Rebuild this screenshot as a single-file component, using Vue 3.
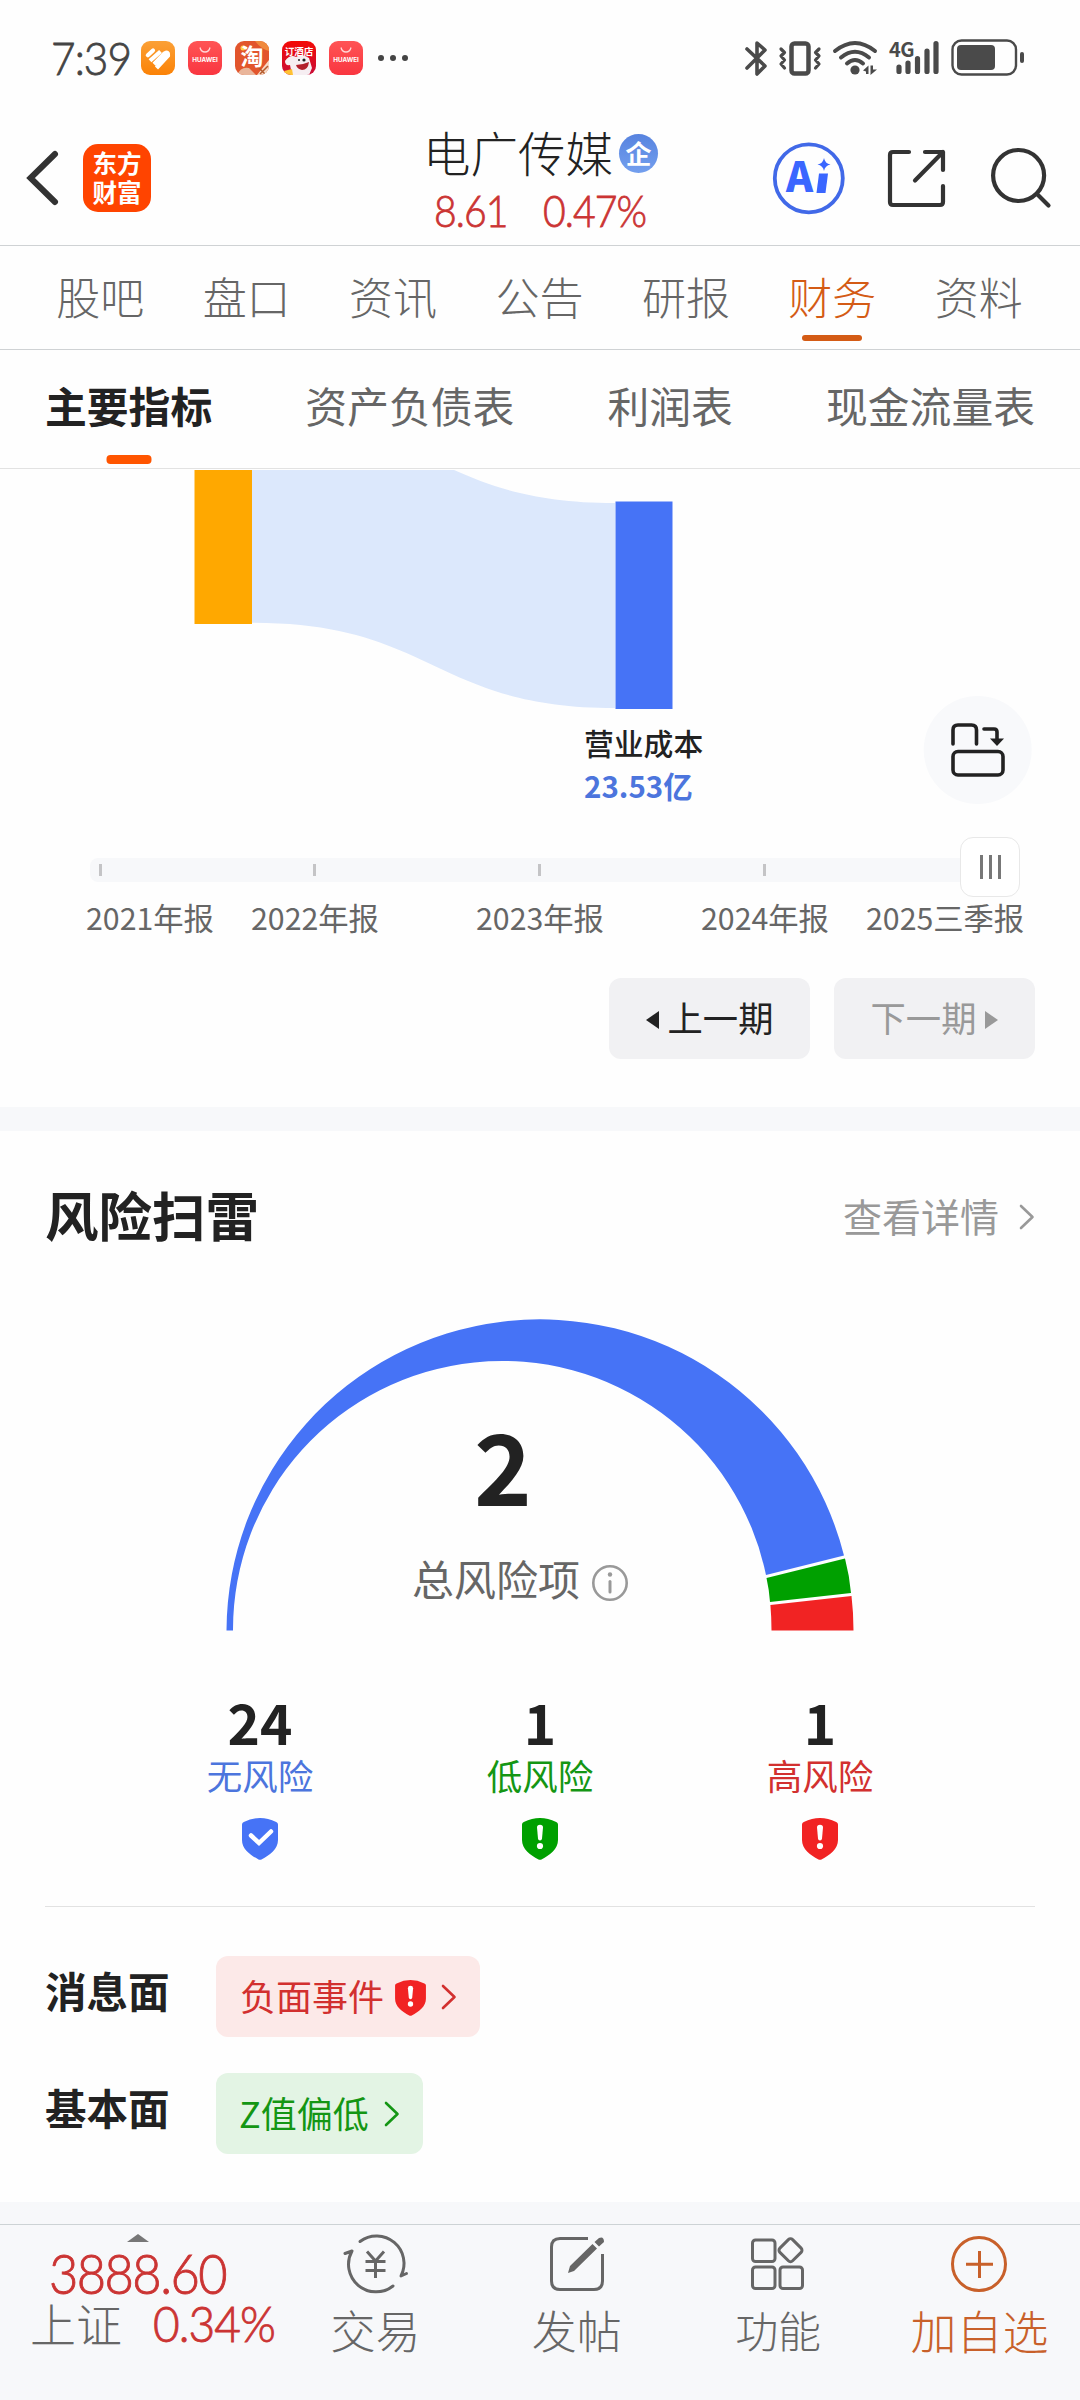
<template>
  <div class="page">
    <svg width="0" height="0" class="defs">
      <symbol id="shield" viewBox="0 0 36 42">
        <path
          d="M0 6.5Q0 4.6 1.8 4 10 0 18 0T34.200 4Q36 4.600 36 6.500V22C36 31 28 37 19.500 41.400Q18 42.200 16.500 41.400C8 37 0 31 0 22Z"
          fill="currentColor"
        />
      </symbol>
      <symbol id="warn" viewBox="0 0 36 42">
        <use href="#shield" width="36" height="42" />
        <path
          d="M15 9.500Q15 6.800 18 6.800T21 9.500L20 20.500Q19.800 22.500 18 22.500T16 20.500Z"
          fill="#fff"
        />
        <circle cx="18" cy="28" r="3.100" fill="#fff" />
      </symbol>
      <symbol id="safe" viewBox="0 0 36 42">
        <use href="#shield" width="36" height="42" />
        <path
          d="M9 17.500L17 25L29 13.500"
          fill="none"
          stroke="#fff"
          stroke-width="4.500"
          stroke-linecap="round"
        />
      </symbol>
      <symbol id="arrow" viewBox="0 0 16 26">
        <path
          d="M2 2L13.500 13L2 24"
          fill="none"
          stroke="currentColor"
          stroke-width="2.600"
          stroke-linecap="round"
          stroke-linejoin="round"
        />
      </symbol>
    </svg>

    <div class="status">
      <span class="time">7:39</span>
      <div class="apps">
        <span class="app orange">
          <svg viewBox="0 0 34 34">
            <g fill="none" stroke="#fff" stroke-width="4.200">
              <path d="M6.800 14.200L12 9.500" stroke-linecap="round" />
              <path d="M9 19.800L19.500 10.500" />
              <path d="M13 23.200L23.500 12.500Q27.500 10 27 14.500L15.500 27" />
            </g>
          </svg>
        </span>
        <span class="app huawei">
          <svg viewBox="0 0 34 34">
            <path
              d="M12 6.500Q13 11 17 11T22 6.500"
              fill="none"
              stroke="#ffd5d5"
              stroke-width="1.300"
            />
          </svg>
          <b>HUAWEI</b>
        </span>
        <span class="app taobao">
          <svg viewBox="0 0 34 34">
            <path d="M20 0H34V10Q26 8 20 0Z" fill="#f08a3c" />
            <circle cx="8" cy="7" r="2.500" fill="#ffd04a" />
            <path d="M2 34Q6 25 14 27L21 34Z" fill="#e9b59a" />
            <path d="M22 34L34 19V34Z" fill="#f6d9c4" />
            <path d="M25 33L33 25M24 27L30 33" stroke="#b45a2c" stroke-width="1.500" />
          </svg>
          <b>淘</b>
        </span>
        <span class="app hotel">
          <svg viewBox="0 0 34 34">
            <path
              d="M3 20Q8 13 14 16Q20 12 27 17L30 27L27 34H10L8 24Q3 25 3 20Z"
              fill="#f6eef2"
            />
            <path d="M14 24Q20 24 27 21Q26 29 20 29Q15 28 14 24Z" fill="#b3202c" />
            <circle cx="17" cy="19" r="1" fill="#222" />
            <circle cx="22" cy="19" r="1.600" fill="#222" />
            <path d="M2 30L10 28L11 34H3Z" fill="#ffc233" />
          </svg>
          <b>订酒店</b>
        </span>
        <span class="app huawei">
          <svg viewBox="0 0 34 34">
            <path
              d="M12 6.500Q13 11 17 11T22 6.500"
              fill="none"
              stroke="#ffd5d5"
              stroke-width="1.300"
            />
          </svg>
          <b>HUAWEI</b>
        </span>
      </div>
      <div class="dots"><i></i><i></i><i></i></div>
      <svg class="signals" width="290" height="42" viewBox="740 36 290 42">
        <g fill="none" stroke="#4a4a4a" stroke-linecap="round" stroke-linejoin="round">
          <path
            d="M747 48L765 65L757 73V42L765 49L747 67"
            stroke-width="3.600"
          />
          <rect x="791.500" y="42.500" width="17" height="30" rx="3" stroke-width="4.500" />
          <path
            d="M781 48L784.500 51.500L781 55L784.500 59L781 63L784.500 67M819 48L815.500 51.500L819 55L815.500 59L819 63L815.500 67"
            stroke-width="3.200"
          />
          <g stroke-width="4">
            <path d="M835 50Q855 34 875 50" />
            <path d="M841 56.500Q855 45 869 56.500" />
            <path d="M847 62.500Q855 55.500 863 62.500" />
          </g>
          <path
            d="M899 66V70.500M908 62V70.500M917.500 57.500V70.500M927 50V70.500M936 42.500V70.500"
            stroke-width="5.200"
          />
          <rect x="952.500" y="39.500" width="63.500" height="34" rx="9" stroke-width="2.400" />
        </g>
        <g fill="#4a4a4a">
          <circle cx="855" cy="69" r="4.600" />
          <path d="M863 69.500L868.500 64.500V73H866V70.500ZM870.500 64.500H873V68.500H877L870.500 74Z" />
          <rect x="957" y="44" width="38" height="25" rx="4" />
          <rect x="1020" y="51" width="4" height="11" rx="2" />
        </g>
        <text x="889" y="56" class="net">4G</text>
      </svg>
    </div>

    <header class="header">
      <svg class="back" width="36" height="58" viewBox="0 0 36 58">
        <path
          d="M30 5L5.500 29L30 53"
          fill="none"
          stroke="#333"
          stroke-width="6"
          stroke-linecap="round"
        />
      </svg>
      <div class="logo">东方<br />财富</div>
      <div class="stock">
        <div class="name">电广传媒<span class="corp">企</span></div>
        <div class="quote"><span>8.61</span><span>0.47%</span></div>
      </div>
      <svg class="tools" width="290" height="76" viewBox="765 140 290 76">
        <circle cx="808.800" cy="178.300" r="34" fill="none" stroke="#4169e8" stroke-width="3.800" />
        <text x="786" y="191.500" class="ai">A</text>
        <path d="M819 173.500H828L825.500 193H816.500Z" fill="#3a66ff" />
        <path
          d="M824 158Q825 163.500 830.500 164.500Q825 165.500 824 171Q823 165.500 817.500 164.500Q823 163.500 824 158Z"
          fill="#3a66ff"
        />
        <g fill="none" stroke="#333" stroke-width="4.200" stroke-linecap="round" stroke-linejoin="round">
          <path d="M909 152H893Q890 152 890 155V202Q890 205 893 205H940Q943 205 943 202V186" />
          <path d="M925 152H943V170M943 152L915 180.500" />
          <circle cx="1018.600" cy="175.500" r="25.500" />
          <path d="M1037 194L1048.500 205.500" />
        </g>
      </svg>
    </header>

    <nav class="tabs">
      <a v-for="t in tabs" :key="t" :class="{ active: t === '财务' }">{{ t }}</a>
    </nav>
    <nav class="subtabs">
      <a v-for="(t, i) in subTabs" :key="t" :class="{ active: i === 0 }">{{ t }}</a>
    </nav>

    <section class="flow">
      <svg width="1080" height="360" viewBox="0 470 1080 360">
        <path
          d="M252 418C433.500 418 433.500 503 615 503V708C433.500 708 433.500 622.700 252 622.700Z"
          fill="#dce8fc"
        />
        <rect x="194.500" y="460" width="57.500" height="164" fill="#ffa800" />
        <rect x="615.500" y="501.500" width="57" height="207.500" fill="#4673f6" />
        <text x="584" y="755" class="node-name">营业成本</text>
        <text x="584" y="797.500" class="node-value">23.53亿</text>
        <circle cx="977.700" cy="750" r="54" fill="#f8f9fb" />
        <g fill="none" stroke="#222" stroke-width="3.600" stroke-linecap="round">
          <path d="M953 744V730Q953 725 958 725H971.500Q976.500 725 976.500 730V744" />
          <rect x="953" y="751.500" width="50" height="23.500" rx="5" />
          <path d="M984 729H994Q997 729 997 732V739" />
        </g>
        <path d="M990 738.500H1004L997 746Z" fill="#222" />
      </svg>
      <div class="slider">
        <div class="track"><i v-for="n in 4" :key="n"></i></div>
        <div class="thumb"><i></i><i></i><i></i></div>
      </div>
      <div class="periods">
        <span v-for="p in periods" :key="p">{{ p }}</span>
      </div>
      <div class="pager">
        <button class="prev">
          <svg width="13" height="18"><path d="M13 0V18L0 9Z" fill="#222" /></svg>上一期
        </button>
        <button class="next">
          下一期<svg width="13" height="18"><path d="M0 0V18L13 9Z" fill="#999" /></svg>
        </button>
      </div>
    </section>

    <section class="risk">
      <div class="risk-head">
        <h2>风险扫雷</h2>
        <a>查看详情<svg width="16" height="26"><use href="#arrow" /></svg></a>
      </div>
      <svg class="gauge" width="1080" height="350" viewBox="0 1300 1080 350">
        <path
          d="M226.500 1630.500A313.500 312.500 0 0 1 844 1555.500L766 1575A269.300 268.500 0 0 0 233 1630.500Z"
          fill="#4673f6"
        />
        <path d="M845 1558.500Q849.500 1576 851 1593L770 1602Q769 1589 766.500 1578Z" fill="#00a000" />
        <path d="M851.500 1596Q853.500 1613 853.500 1630.500H771.500Q771.500 1617 770.400 1605Z" fill="#f12323" />
        <text x="503" y="1506" class="total">2</text>
        <text x="412" y="1596" class="total-label">总风险项</text>
        <g fill="none" stroke="#999" stroke-width="2.600" stroke-linecap="round">
          <circle cx="610" cy="1583" r="16.700" />
          <path d="M610 1581.500V1592" stroke-width="3" />
        </g>
        <circle cx="610" cy="1574.500" r="2.200" fill="#999" />
      </svg>
      <div class="counts">
        <div v-for="c in counts" :key="c.label">
          <strong>{{ c.value }}</strong>
          <span :style="{ color: c.color }">{{ c.label }}</span>
          <svg width="36" height="42" :style="{ color: c.fill }"><use :href="c.icon" /></svg>
        </div>
      </div>
      <div class="row">
        <b>消息面</b>
        <span class="tag red">
          <span>负面事件</span>
          <svg class="mark" width="31" height="36"><use href="#warn" /></svg>
          <svg width="16" height="26"><use href="#arrow" /></svg>
        </span>
      </div>
      <div class="row">
        <b>基本面</b>
        <span class="tag green">
          <span>Z值偏低</span>
          <svg width="16" height="26"><use href="#arrow" /></svg>
        </span>
      </div>
    </section>

    <footer class="bottom">
      <div class="index">
        <svg width="22" height="8"><path d="M0 8L11 0L22 8Z" fill="#777" /></svg>
        <div class="point">3888.60</div>
        <div class="change">上证<em>0.34%</em></div>
      </div>
      <a>
        <svg width="66" height="60" viewBox="343 2234 66 60">
          <g fill="none" stroke="#666" stroke-width="3" stroke-linecap="round" stroke-linejoin="round">
            <path d="M360 2241.500A27.500 27.500 0 0 1 401 2276L406.500 2273.500" />
            <path d="M393 2286A27.500 27.500 0 0 1 352 2251L345 2253.500" />
            <path d="M367 2251.500L375.500 2261L384 2251.500M365.500 2261.500H385.500M365.500 2270.500H385.500M375.500 2261V2278" stroke-linecap="butt" />
          </g>
        </svg>
        交易
      </a>
      <a>
        <svg width="56" height="60" viewBox="549 2234 56 60">
          <path
            d="M588 2238.500H560Q551.500 2238.500 551.500 2247V2281Q551.500 2289.500 560 2289.500H594Q602.500 2289.500 602.500 2281V2254"
            fill="none"
            stroke="#666"
            stroke-width="3"
          />
          <path d="M568 2273L570 2266L592.500 2244L597 2248.500L574 2271ZM594.500 2242L599 2238Q604 2236 604 2242L599 2246.500Z" fill="#666" />
        </svg>
        发帖
      </a>
      <a class="fn">
        <svg width="56" height="60" viewBox="751 2234 56 60">
          <g fill="none" stroke="#666" stroke-width="3">
            <rect x="753.500" y="2240" width="22.500" height="21.500" rx="3" />
            <rect x="753.500" y="2267" width="22.500" height="21.500" rx="3" />
            <rect x="781" y="2267" width="22.500" height="21.500" rx="3" />
            <rect x="782.500" y="2241.200" width="18" height="18" rx="3" transform="rotate(45 791.500 2250.200)" />
          </g>
        </svg>
        功能
      </a>
      <a class="add">
        <svg width="60" height="60" viewBox="949 2234 60 60">
          <g fill="none" stroke="#c8602a" stroke-width="3">
            <circle cx="979" cy="2264" r="26.500" />
            <path d="M966 2264.300H993M979.500 2251V2278" />
          </g>
        </svg>
        加自选
      </a>
    </footer>
  </div>
</template>

<script setup>
const tabs = ["股吧", "盘口", "资讯", "公告", "研报", "财务", "资料"];
const subTabs = ["主要指标", "资产负债表", "利润表", "现金流量表"];
const periods = ["2021年报", "2022年报", "2023年报", "2024年报", "2025三季报"];
const counts = [
  { value: 24, label: "无风险", color: "#4c75dd", fill: "#4673f6", icon: "#safe" },
  { value: 1, label: "低风险", color: "#149614", fill: "#00a000", icon: "#warn" },
  { value: 1, label: "高风险", color: "#d2302f", fill: "#f12323", icon: "#warn" },
];
</script>

<style>
body {
  margin: 0;
  background: #fff;
}
</style>

<style scoped>
.page {
  width: 1080px;
  height: 2400px;
  overflow: hidden;
  display: flex;
  flex-direction: column;
  background: #fefefe;
  color: #222;
  font-family: "Noto Sans CJK SC", sans-serif;
}
.page > * {
  flex: none;
  box-sizing: border-box;
}
.defs {
  position: absolute;
}
svg {
  display: block;
  flex: none;
}

.status {
  height: 116px;
  display: flex;
  align-items: center;
  padding-left: 51px;
}
.time {
  width: 90px;
  font: 300 46px/60px Lato, sans-serif;
  letter-spacing: -1px;
  color: #444;
  -webkit-text-stroke: 0.8px #444;
  transform: scaleX(0.92);
  transform-origin: left;
}
.apps {
  display: flex;
  gap: 13px;
}
.app {
  position: relative;
  width: 34px;
  height: 34px;
  border-radius: 9px;
  color: #fff;
}
.app svg {
  border-radius: 9px;
}
.app b {
  position: absolute;
  inset: 0;
  text-align: center;
  white-space: nowrap;
}
.orange {
  background: linear-gradient(#fba036, #fb8206);
}
.huawei {
  background: linear-gradient(#ff5455, #f93640);
}
.huawei b {
  font: 700 6.3px/39px Inter, sans-serif;
}
.taobao {
  background: #e2552c;
}
.taobao b {
  font-size: 23px;
  line-height: 28px;
}
.hotel {
  background: linear-gradient(#f40a05, #c90d38);
}
.hotel b {
  font-size: 9.5px;
  line-height: 20px;
}
.dots {
  display: flex;
  gap: 6px;
  margin-left: 15px;
}
.dots i {
  width: 6px;
  height: 6px;
  border-radius: 50%;
  background: #444;
}
.signals {
  margin-left: auto;
  margin-right: 50px;
  overflow: visible;
}
.net {
  font: 700 20px "Noto Sans CJK SC", sans-serif;
  fill: #4a4a4a;
  letter-spacing: -0.5px;
}

.header {
  height: 130px;
  border-bottom: 1px solid #cfd2d4;
  display: flex;
  align-items: center;
  padding: 0 25px 5px;
}
.logo {
  width: 68px;
  height: 68px;
  box-sizing: border-box;
  margin-left: 22px;
  padding-top: 4px;
  border-radius: 15px;
  background: #ff4400;
  color: #fff;
  font-size: 24.500px;
  font-weight: 700;
  line-height: 29px;
  text-align: center;
}
.stock {
  flex: 1;
  padding: 5px 0 0 272px;
}
.name {
  display: flex;
  align-items: center;
  font-size: 47.500px;
  font-weight: 300;
  line-height: 52px;
}
.corp {
  width: 39px;
  height: 39px;
  margin: 3px 0 0 6px;
  border-radius: 50%;
  background: linear-gradient(#5783df, #739fee);
  color: #fff;
  font-size: 26px;
  font-weight: 700;
  line-height: 37px;
  text-align: center;
}
.quote {
  display: flex;
  gap: 39px;
  padding: 8px 0 0 12px;
  font: 300 43px/50px Lato, sans-serif;
  letter-spacing: -1px;
  color: #cb3433;
  -webkit-text-stroke: 0.8px #cb3433;
  transform: scaleX(0.91);
  transform-origin: left;
}
.ai {
  font: 900 41px "Noto Sans CJK SC", sans-serif;
  fill: #3a66ff;
}

.tabs {
  height: 104px;
  border-bottom: 1px solid #cfd2d4;
  display: flex;
  padding: 0 28px 0 27px;
}
.tabs a {
  flex: 1;
  position: relative;
  text-align: center;
  font-size: 44px;
  font-weight: 300;
  line-height: 100px;
  color: #666;
}
.tabs .active {
  color: #d45b15;
}
.tabs .active::after,
.subtabs .active::after {
  content: "";
  position: absolute;
  left: 50%;
  transform: translateX(-50%);
  border-radius: 4px;
}
.tabs .active::after {
  bottom: 8px;
  width: 60px;
  height: 6px;
  background: #d45b15;
}
.subtabs {
  height: 119px;
  border-bottom: 1px solid #e2e2e2;
  display: flex;
  justify-content: space-between;
  padding: 0 45px;
}
.subtabs a {
  position: relative;
  font-size: 41.800px;
  line-height: 111px;
  color: #666;
}
.subtabs .active {
  font-weight: 700;
  color: #222;
}
.subtabs .active::after {
  bottom: 4px;
  width: 45px;
  height: 9px;
  background: #ff5500;
}

.flow {
  height: 638px;
  padding-top: 1px;
}
.node-name {
  font-size: 29.800px;
  font-weight: 500;
  fill: #222;
}
.node-value {
  font: 700 29.500px "Noto Sans CJK SC", sans-serif;
  fill: #4c75dd;
}
.slider {
  position: relative;
  height: 74px;
  padding: 28px 60px 0 90px;
  box-sizing: border-box;
}
.track {
  height: 24px;
  border-radius: 8px;
  background: #f7f8fa;
  display: grid;
  grid-template-columns: 214px 225px 225px auto;
  align-items: center;
  padding-left: 9px;
}
.track i {
  width: 3px;
  height: 12px;
  background: #c4c4c6;
}
.thumb {
  position: absolute;
  left: 960px;
  top: 7px;
  width: 60px;
  height: 60px;
  box-sizing: border-box;
  border: 1.500px solid #e8e8e8;
  border-radius: 13px;
  background: #fff;
  display: flex;
  align-items: center;
  justify-content: center;
  gap: 6px;
}
.thumb i {
  width: 3px;
  height: 24px;
  background: #777;
}
.periods {
  display: grid;
  grid-template-columns: 165px 225px 225px 165px auto;
  padding-left: 86px;
  margin-top: -3px;
  font-size: 30.300px;
  line-height: 33px;
  color: #666;
  white-space: nowrap;
}
.pager {
  display: flex;
  justify-content: flex-end;
  gap: 24px;
  padding: 44px 45px 0 0;
}
.pager button {
  width: 201px;
  height: 81px;
  border: 0;
  padding: 0 0 3px;
  border-radius: 12px;
  background: #f1f1f3;
  display: flex;
  align-items: center;
  justify-content: center;
  gap: 9px;
  font: 400 35.300px/78px "Noto Sans CJK SC", sans-serif;
  color: #222;
}
.pager svg {
  margin-top: 5px;
}
.pager .next {
  color: #999;
}

.risk {
  height: 1095px;
  border-top: 24px solid #f7f8fa;
}
.risk-head {
  height: 169px;
  padding: 0 45px;
  display: flex;
  align-items: center;
  justify-content: space-between;
}
.risk-head h2 {
  margin: -4px 0 0;
  font-size: 53.500px;
  line-height: 60px;
}
.risk-head a {
  display: flex;
  align-items: center;
  gap: 20px;
  margin-top: -2px;
  font-size: 39px;
  color: #999;
}
.risk-head svg {
  margin-top: 5px;
}
.total {
  font: 700 98px "Noto Sans CJK SC", sans-serif;
  fill: #222;
  text-anchor: middle;
}
.total-label {
  font-size: 42px;
  fill: #666;
}
.counts {
  height: 257px;
  margin: 0 45px;
  padding: 41px 75px 0;
  box-sizing: border-box;
  border-bottom: 1px solid #e2e2e2;
  display: flex;
  justify-content: space-between;
}
.counts div {
  width: 280px;
  display: flex;
  flex-direction: column;
  align-items: center;
}
.counts strong {
  font-size: 55px;
  line-height: 60px;
}
.counts span {
  font-size: 35.500px;
  line-height: 47px;
}
.counts svg {
  margin-top: 20px;
}
.row {
  display: flex;
  padding: 49px 0 0 45px;
}
.row + .row {
  padding-top: 36px;
}
.row b {
  width: 171px;
  font-size: 41.500px;
  line-height: 69px;
}
.tag {
  height: 81px;
  padding: 0 24px;
  border-radius: 12px;
  display: flex;
  align-items: center;
  font-size: 36px;
}
.tag span {
  margin-top: -4px;
}
.tag svg {
  margin-left: 15px;
  margin-right: -1px;
}
.tag .mark {
  margin: 2px 0 0 11px;
  color: #f12323;
}
.red {
  background: #fce9e8;
  color: #d2302f;
}
.green {
  background: #e3f4e4;
  color: #149614;
}
.green span {
  margin-left: -1px;
}

.bottom {
  height: 198px;
  border-top: 22px solid #f7f8fa;
  background: #f7f8fa;
  box-shadow: inset 0 1px #cdd3d5;
  display: flex;
}
.bottom > a {
  width: 201.300px;
  padding-top: 10px;
  box-sizing: border-box;
  display: flex;
  flex-direction: column;
  align-items: center;
  font-size: 45px;
  font-weight: 300;
  line-height: 71px;
  color: #666;
}
.bottom > .fn {
  font-size: 43px;
}
.bottom > .add {
  font-size: 46px;
  color: #c8602a;
}
.index {
  width: 275px;
  padding-top: 10px;
  box-sizing: border-box;
}
.index svg {
  margin-left: 127px;
}
.point {
  margin-left: 49px;
  font: 300 55px/62px Lato, sans-serif;
  letter-spacing: -1.700px;
  color: #cb3433;
  -webkit-text-stroke: 0.9px #cb3433;
  transform: scaleX(0.92);
  transform-origin: left;
}
.change {
  display: flex;
  gap: 31px;
  padding-left: 30px;
  margin-top: -3px;
  font-size: 46px;
  font-weight: 300;
  line-height: 42px;
  color: #666;
  white-space: nowrap;
}
.change em {
  font: 300 50px/45px Lato, sans-serif;
  letter-spacing: -1px;
  color: #cb3433;
  -webkit-text-stroke: 0.9px #cb3433;
  transform: scaleX(0.92);
  transform-origin: left;
}
</style>
